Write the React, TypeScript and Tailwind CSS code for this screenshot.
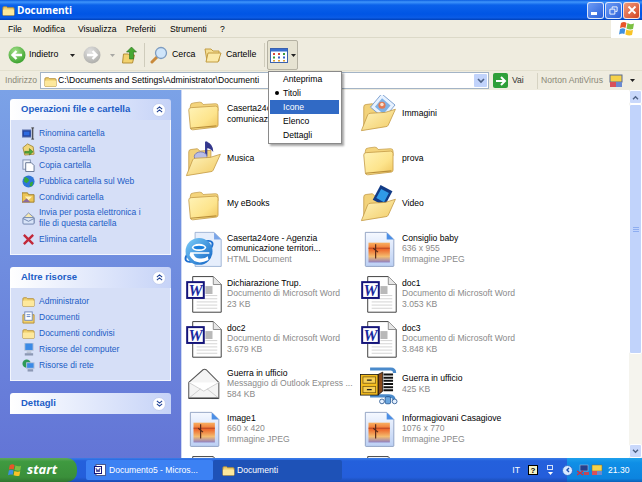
import type { ReactNode } from "react"

const Folder = ({ className = "w-[38px] h-[38px]" }: { className?: string }) => (
  <svg viewBox="0 0 48 48" className={className}>
    <defs>
      <linearGradient id="fg" x1="0" y1="0" x2="1" y2="1">
        <stop offset="0" stopColor="#fff3b8" />
        <stop offset="0.6" stopColor="#fde48c" />
        <stop offset="1" stopColor="#efc45c" />
      </linearGradient>
    </defs>
    <path d="M8 14 Q8 10 12 10 L20 9 Q23 9 24 12 L40 11 Q43 11 43 14 L43 20 L8 22 Z" fill="#f4d47c" stroke="#c9a351" />
    <path d="M6 19 Q6 16 9 16 L40 14 Q43 14 43 17 L43 38 Q43 40 41 40.5 L11 44 Q8 44 8 41 Z" fill="url(#fg)" stroke="#c39a45" />
    <path d="M8 42 L41 39" stroke="#b98f3a" strokeWidth="1.5" />
  </svg>
)

const OpenFolder = ({ children }: { children?: ReactNode }) => (
  <svg viewBox="0 0 48 48" className="w-[38px] h-[38px]">
    <defs>
      <linearGradient id="ofg" x1="0" y1="0" x2="1" y2="1">
        <stop offset="0" stopColor="#fff5c0" />
        <stop offset="1" stopColor="#f2cb64" />
      </linearGradient>
    </defs>
    <path d="M6 15 Q6 12 9 12 L17 11 L20 14 L34 13 L34 34 L6 44 Z" fill="#f2d27a" stroke="#c39a45" />
    {children}
    <path d="M3 45 L11 25 Q12 23 15 23 L33 22 L46 18 L37 38 Q36 40 34 40 Z" fill="url(#ofg)" stroke="#c39a45" />
  </svg>
)

const Music = () => (
  <OpenFolder>
    <path d="M28 2 L28 20" stroke="#3b3f96" strokeWidth="3" />
    <path d="M28 2 Q37 5 37 15 Q33 10 28 10 Z" fill="#34378c" />
    <ellipse cx="21" cy="21" rx="8" ry="6" fill="#b8bde6" stroke="#6a6fb5" />
  </OpenFolder>
)

const Pictures = () => (
  <OpenFolder>
    <rect x="19" y="3" width="22" height="22" transform="rotate(40 30 14)" fill="#e8f2ff" stroke="#6f95c9" />
    <rect x="23" y="7" width="14" height="14" transform="rotate(40 30 14)" fill="#7fb2e6" />
    <circle cx="29" cy="13" r="4.5" fill="#e07a55" />
    <circle cx="29" cy="12" r="2.2" fill="#fbe2cf" />
  </OpenFolder>
)

const VideoFolder = () => (
  <OpenFolder>
    <rect x="21" y="3" width="17" height="21" transform="rotate(28 30 14)" fill="#123b86" />
    <rect x="24" y="7" width="11" height="13" transform="rotate(28 30 14)" fill="#2f9ae8" />
    <path d="M26 24 L34 26 L28 32 Z" fill="#f3d9a0" stroke="#c9a351" />
  </OpenFolder>
)

const Sheet = () => (
  <>
    <path d="M11 2 L37 2 L47 12 L47 47 L11 47 Z" fill="#ffffff" stroke="#3a3a3a" strokeWidth="1.2" />
    <path d="M37 2 L37 12 L47 12" fill="#e6e6e6" stroke="#777777" />
    <rect x="27" y="14" width="9" height="10" fill="#b9b9b9" />
    <path d="M16 30 H42 M16 34 H42 M16 38 H42 M16 42 H42 M27 26 H42" stroke="#c9c9c9" />
  </>
)

const Page = () => (
  <svg viewBox="0 0 48 48" className="w-[38px] h-[38px] overflow-visible">
    <Sheet />
    <rect x="4" y="9" width="21" height="20" fill="#ffffff" stroke="#14147a" strokeWidth="2.5" />
    <text x="14.5" y="26" textAnchor="middle" fontSize="20" fontWeight="700" fontStyle="italic" fontFamily="'Liberation Serif', serif" fill="#1a2aa0">W</text>
  </svg>
)

// last row: only the top of the sheet shows above the taskbar
const PageTop = () => (
  <svg viewBox="0 0 48 48" className="w-[38px] h-[38px] overflow-visible">
    <Sheet />
  </svg>
)

const JpegDoc = () => (
  <svg viewBox="0 0 48 48" className="w-[38px] h-[38px]">
    <defs>
      <linearGradient id="jp" x1="0" y1="0" x2="0" y2="1">
        <stop offset="0" stopColor="#f6f9ff" />
        <stop offset="1" stopColor="#bcd0f4" />
      </linearGradient>
      <linearGradient id="sun" x1="0" y1="0" x2="0" y2="1">
        <stop offset="0" stopColor="#f8b060" />
        <stop offset="0.35" stopColor="#ee6a2c" />
        <stop offset="0.7" stopColor="#f4bc70" />
        <stop offset="1" stopColor="#8f7fc0" />
      </linearGradient>
    </defs>
    <path d="M8 3 L35 3 L44 12 L44 45 Q44 46 43 46 L9 46 Q8 46 8 45 Z" fill="url(#jp)" stroke="#7f93b8" />
    <path d="M35 3 L35 12 L44 12 Z" fill="#4c8fe6" />
    <rect x="12" y="16" width="27" height="25" fill="url(#sun)" />
    <path d="M12 23 H39" stroke="#a8341a" />
    <path d="M21 18 V36 M18 23 L24 28" stroke="#5a2a1a" strokeWidth="1.5" />
  </svg>
)

const IeDoc = () => (
  <svg viewBox="0 0 48 48" className="w-[38px] h-[38px]">
    <defs>
      <linearGradient id="ie" x1="0" y1="0" x2="1" y2="1">
        <stop offset="0" stopColor="#7fd0fa" />
        <stop offset="1" stopColor="#0f62c4" />
      </linearGradient>
    </defs>
    <path d="M14 3 L38 3 L47 12 L47 46 L14 46 Z" fill="#e6eefc" stroke="#8ea6cc" />
    <path d="M38 3 L38 12 L47 12 Z" fill="#7aa5e8" />
    <ellipse cx="19" cy="27" rx="20" ry="8" transform="rotate(-35 19 27)" fill="none" stroke="#1d6fd0" strokeWidth="2.5" />
    <circle cx="19" cy="27" r="17" fill="url(#ie)" />
    <ellipse cx="19" cy="22" rx="9" ry="4.5" fill="#ffffff" />
    <ellipse cx="19" cy="22" rx="7" ry="2.2" fill="#1a7fdc" />
    <path d="M8 28 H32 L32 30 H12 Q14 37 22 36 Q27 36 30 33 L31 38 Q14 46 7 32 Z" fill="#ffffff" />
  </svg>
)

const Mail = () => (
  <svg viewBox="0 0 48 48" className="w-[38px] h-[38px]">
    <path d="M6 22 L24 6 Q26 5 28 6 L44 22 L44 42 L6 42 Z" fill="#f4f4f4" stroke="#555555" strokeWidth="1.3" />
    <path d="M6 22 L25 33 L44 22" fill="#ffffff" stroke="#c6c6c6" />
    <path d="M6 42 L21 30 M44 42 L29 30" stroke="#c6c6c6" />
    <path d="M6 42 H44" stroke="#3a3a3a" strokeWidth="1.6" />
  </svg>
)

const WinZip = () => (
  <svg viewBox="0 0 48 48" className="w-[38px] h-[38px] overflow-visible">
    <path d="M14 5 H40 Q45 5 45 10 M14 39 H38 Q45 39 44 45" fill="none" stroke="#4a8acb" strokeWidth="4" />
    <path d="M31 12 H43 M31 16 H43 M31 20 H43 M31 24 H43 M31 28 H43 M31 32 H43" stroke="#111111" strokeWidth="2.5" />
    <path d="M24 12 L30 9 L30 33 L24 38 Z" fill="#8a4a1c" stroke="#111111" />
    <rect x="2" y="12" width="22" height="26" fill="#f5bd1f" stroke="#111111" />
    <rect x="5" y="15" width="16" height="8" fill="#f7cf55" stroke="#7a5a10" />
    <rect x="5" y="27" width="16" height="8" fill="#f7cf55" stroke="#7a5a10" />
    <path d="M10 19 H16 M10 31 H16" stroke="#222222" strokeWidth="1.5" />
    <circle cx="29" cy="46" r="3" fill="#e6f1ff" stroke="#1d4f8c" />
    <circle cx="45" cy="46" r="3" fill="#e6f1ff" stroke="#1d4f8c" />
    <rect x="33" y="40" width="7" height="9" rx="2" fill="#6aa6df" stroke="#1d4f8c" />
  </svg>
)

const Flag = ({ className }: { className: string }) => (
  <svg viewBox="0 0 16 15" className={className}>
    <path d="M2 2 Q5 0 7.5 2 L6.5 7 Q4 5.5 1 7 Z" fill="#e8552a" />
    <path d="M8.5 2 Q11 4 15 2.5 L14 8 Q11 9 7.5 7.5 Z" fill="#7cc043" />
    <path d="M1 8 Q4 6.5 6.3 8 L5.4 13 Q3 12 0 13.5 Z" fill="#3d8fe0" />
    <path d="M7.3 8.5 Q10.5 10 14 9 L13 14 Q10 15 6.4 13.5 Z" fill="#f8c326" />
  </svg>
)

const Ball = ({ dim }: { dim?: boolean }) => (
  <svg viewBox="0 0 18 18" className="w-[18px] h-[18px]">
    <defs>
      <radialGradient id="gb" cx="0.4" cy="0.3" r="0.8">
        <stop offset="0" stopColor="#a5e08a" />
        <stop offset="1" stopColor="#2d9a23" />
      </radialGradient>
      <radialGradient id="db" cx="0.4" cy="0.3" r="0.8">
        <stop offset="0" stopColor="#e2e2e2" />
        <stop offset="1" stopColor="#a8a8a4" />
      </radialGradient>
    </defs>
    <circle cx="9" cy="9" r="8.5" fill={dim ? "url(#db)" : "url(#gb)"} />
    {dim ? (
      <path d="M4 9 H13 M9.5 5 L13.5 9 L9.5 13" fill="none" stroke="#ffffff" strokeWidth="2.4" />
    ) : (
      <path d="M14 9 H5 M8.5 5 L4.5 9 L8.5 13" fill="none" stroke="#ffffff" strokeWidth="2.4" />
    )}
  </svg>
)

const Arrow = ({ color = "#222222" }: { color?: string }) => (
  <svg viewBox="0 0 5 3" className="w-[5px] h-[3px]">
    <path d="M0 0 H5 L2.5 3 Z" fill={color} />
  </svg>
)

const Chevrons = ({ down }: { down?: boolean }) => (
  <span className="w-[14px] h-[14px] rounded-full bg-white border border-[#c3cff0] flex items-center justify-center">
    <svg viewBox="0 0 8 8" className="w-[7px] h-[7px]">
      <path d={down ? "M1 1 L4 3.5 L7 1 M1 4.5 L4 7 L7 4.5" : "M1 3.5 L4 1 L7 3.5 M1 7 L4 4.5 L7 7"} fill="none" stroke="#1c3f94" strokeWidth="1.3" />
    </svg>
  </span>
)

const small = {
  rename: (
    <svg viewBox="0 0 14 14" className="w-[13px] h-[13px]">
      <rect x="0" y="3" width="10" height="8" fill="#24449c" stroke="#8a9ac6" />
      <rect x="2" y="5" width="6" height="4" fill="#2d6ae0" />
      <rect x="10" y="2" width="3" height="10" fill="#c0c8dc" />
      <path d="M11.5 1 V13 M10 1 H13 M10 13 H13" stroke="#333333" />
    </svg>
  ),
  move: (
    <svg viewBox="0 0 14 14" className="w-[13px] h-[13px]">
      <path d="M1 5 L6 1 L12 4 L13 12 L3 13 Z" fill="#f1d679" stroke="#a48a3c" />
      <path d="M3 9 H8 V6 L12 9.5 L8 13 V11 H3 Z" fill="#4fa83a" stroke="#2a6a20" strokeWidth="0.5" />
    </svg>
  ),
  copy: (
    <svg viewBox="0 0 14 14" className="w-[13px] h-[13px]">
      <rect x="1" y="1" width="8" height="10" fill="#eef2fb" stroke="#7f8fb0" />
      <path d="M4 4 H10 L13 7 V13.5 H4 Z" fill="#ffffff" stroke="#5f6f90" />
    </svg>
  ),
  web: (
    <svg viewBox="0 0 14 14" className="w-[13px] h-[13px]">
      <circle cx="7" cy="7" r="6.5" fill="#2d75d8" />
      <path d="M3 2 Q7 3 8 6 L5 9 L2 7 Z M9 8 L12 7 L11 12 L8 12 Z" fill="#36a83a" />
    </svg>
  ),
  share: (
    <svg viewBox="0 0 14 14" className="w-[13px] h-[13px]">
      <path d="M0 2 H6 L7 4 H13 V12 H0 Z" fill="#edc556" stroke="#9a7c2c" />
      <path d="M3 6 L11 6 L7 10 Z" fill="#fff1b8" />
      <path d="M0 12 L5 8 L9 12" fill="#8b6a9e" />
    </svg>
  ),
  mail: (
    <svg viewBox="0 0 14 14" className="w-[13px] h-[13px]">
      <path d="M2 6 L7 1 L13 6 V12 H2 Z" fill="#f7e9b0" stroke="#7d8db0" />
      <rect x="1" y="6" width="12" height="7" rx="1" fill="#d8e4f8" stroke="#6d82ac" />
      <path d="M1 7 L7 10 L13 7" fill="none" stroke="#6d82ac" />
    </svg>
  ),
  del: (
    <svg viewBox="0 0 14 14" className="w-[13px] h-[13px]">
      <path d="M2 2 L12 12 M12 2 L2 12" stroke="#c2293a" strokeWidth="2.6" />
    </svg>
  ),
  folder: (
    <svg viewBox="0 0 14 14" className="w-[13px] h-[13px]">
      <path d="M1 4 Q1 3 2 3 H5 L6 4 H12 Q13 4 13 5 V12 H1 Z" fill="#f2d26e" stroke="#b48f38" />
      <path d="M1 6 H13 V12 H1 Z" fill="#fde89c" />
    </svg>
  ),
  docs: (
    <svg viewBox="0 0 14 14" className="w-[13px] h-[13px]">
      <path d="M1 4 H13 V13 H1 Z" fill="#f2d26e" stroke="#b48f38" />
      <rect x="3" y="1" width="8" height="9" fill="#ffffff" stroke="#6f86b8" />
      <path d="M5 4 H9 M5 6 H9" stroke="#5b7fc8" />
    </svg>
  ),
  computer: (
    <svg viewBox="0 0 14 14" className="w-[13px] h-[13px]">
      <rect x="3" y="0" width="9" height="8" fill="#3b8ae6" stroke="#c0c8d8" />
      <path d="M5 9 H10 V11 H5 Z" fill="#bcc4d4" />
      <path d="M3 11 H12 V13.5 H3 Z" fill="#8c98b4" />
    </svg>
  ),
  network: (
    <svg viewBox="0 0 14 14" className="w-[13px] h-[13px]">
      <circle cx="5" cy="5" r="4.5" fill="#2e9a58" />
      <rect x="5" y="4" width="8" height="6" fill="#3b8ae6" stroke="#b9c4da" />
      <path d="M6 11 H12 V13.5 H6 Z" fill="#8c98b4" />
    </svg>
  ),
}

const NavRow = ({ icon, children }: { icon: ReactNode; children: ReactNode }) => (
  <div className="flex items-center gap-[4px] min-h-4 leading-[11px] text-[8.5px] text-[#215dc6]">
    <span className="w-[13px] h-[13px] shrink-0">{icon}</span>
    <span className="py-[2px]">{children}</span>
  </div>
)

const TaskCard = ({ title, down, children }: { title: string; down?: boolean; children?: ReactNode }) => (
  <div>
    <div className="h-[21px] pl-[11px] pr-[5px] flex items-center justify-between rounded-t-[3px] bg-gradient-to-r from-white to-[#c6d3f7]">
      <span className="text-[9.5px] font-bold text-[#215dc6]">{title}</span>
      <Chevrons down={down} />
    </div>
    {children && <div className="bg-[#d6dff7] pl-[11px] pr-[8px] pt-[5px] pb-[7px] border-x border-b border-white/70">{children}</div>}
  </div>
)

const Tile = ({ icon, lines = [] }: { icon: ReactNode; lines?: string[] }) => (
  <div className="flex items-center gap-[5px] h-[45px] min-w-0">
    <span className="w-[38px] h-[38px] shrink-0">{icon}</span>
    <div className="text-[8.6px] leading-[10.5px] whitespace-nowrap">
      {lines.map((l, i) => (
        <div key={l} className={i === 0 || l.startsWith("comun") ? "text-black" : "text-[#8a8a8a]"}>
          {l}
        </div>
      ))}
    </div>
  </div>
)

const MenuItem = ({ label, dot, active }: { label: string; dot?: boolean; active?: boolean }) => (
  <div className={`h-[14px] pl-[13px] flex items-center text-[8.6px] relative ${active ? "bg-[#316ac5] text-white" : "text-black"}`}>
    {dot && <span className="absolute left-[5px] top-[5px] w-1 h-1 rounded-full bg-black" />}
    {label}
  </div>
)

export default function App() {
  return (
    <div className="w-[642px] h-[482px] overflow-hidden relative flex flex-col font-['Liberation_Sans',sans-serif] bg-[#ece9d8]">
      {/* title bar */}
      <div className="h-5 shrink-0 flex items-center pl-[2px] pr-[2px] bg-[linear-gradient(180deg,#0a5ce0_0%,#3f95fb_10%,#0b62ea_25%,#0055e5_70%,#0a5be6_88%,#0040b8_100%)]">
        <span className="w-[13px] h-[13px] mr-[2px]">{small.folder}</span>
        <span className="text-white font-bold text-[10px] font-['Open_Sans',sans-serif]">Documenti</span>
        <div className="ml-auto flex gap-[1px]">
          <span className="w-[17px] h-[17px] rounded-[3px] border border-white/80 bg-gradient-to-br from-[#6d9bf5] to-[#2a5fd8] flex items-end pl-[3px] pb-[3px]">
            <span className="w-[6px] h-[3px] bg-white" />
          </span>
          <span className="w-[17px] h-[17px] rounded-[3px] border border-white/80 bg-gradient-to-br from-[#6d9bf5] to-[#2a5fd8] flex items-center justify-center">
            <svg viewBox="0 0 10 10" className="w-[9px] h-[9px]">
              <path d="M3.5 3 V1 H9 V6 H7 M1 3.5 H6.5 V9 H1 Z" fill="none" stroke="#ffffff" strokeWidth="1" />
            </svg>
          </span>
          <span className="w-[17px] h-[17px] rounded-[3px] border border-white/80 bg-gradient-to-br from-[#ef9a7a] to-[#d2401c] flex items-center justify-center">
            <svg viewBox="0 0 10 10" className="w-[10px] h-[10px]">
              <path d="M1.5 1.5 L8.5 8.5 M8.5 1.5 L1.5 8.5" stroke="#ffffff" strokeWidth="1.8" />
            </svg>
          </span>
        </div>
      </div>

      {/* menu bar */}
      <div className="h-[18px] shrink-0 flex items-center pl-2 text-[8.6px] text-black border-b border-[#dcd9c8] bg-[#efecdf]">
        <span className="w-[25px] pt-[1px]">File</span>
        <span className="w-[45px] pt-[1px]">Modifica</span>
        <span className="w-[48px] pt-[1px]">Visualizza</span>
        <span className="w-[44px] pt-[1px]">Preferiti</span>
        <span className="w-[50px] pt-[1px]">Strumenti</span>
        <span className="pt-[1px]">?</span>
        <span className="ml-auto w-[31px] h-[18px] bg-white flex items-center justify-center">
          <Flag className="w-[16px] h-[15px]" />
        </span>
      </div>

      {/* toolbar */}
      <div className="h-[33px] shrink-0 flex items-center pl-2 pt-[2px] text-[8.8px] text-black border-b border-[#e3e0cf] bg-[#efecdf]">
        <Ball />
        <span className="ml-[3px] w-[41px]">Indietro</span>
        <Arrow />
        <span className="ml-[8px]"><Ball dim /></span>
        <span className="ml-[9px]"><Arrow color="#a8a8a4" /></span>
        <svg viewBox="0 0 16 18" className="ml-[7px] w-[17px] h-[18px]">
          <path d="M1 8 H6 L7 9 H12 L10 17 H0 Z" fill="#f2d26e" stroke="#b48f38" />
          <path d="M7 13 V6 H4 L9 1 L14 6 H11 V13 Z" fill="#47a832" stroke="#2b6d20" strokeWidth="0.6" />
        </svg>
        <span className="ml-[5px] w-px h-6 bg-[#cfccbc]" />
        <svg viewBox="0 0 18 18" className="ml-[5px] w-[18px] h-[18px]">
          <path d="M2 16 L7 11" stroke="#c98a3c" strokeWidth="3" strokeLinecap="round" />
          <circle cx="11" cy="7" r="5.5" fill="#cfe5fa" stroke="#7d9cc0" strokeWidth="1.3" />
        </svg>
        <span className="ml-1 w-[32px]">Cerca</span>
        <svg viewBox="0 0 18 16" className="w-[18px] h-4">
          <path d="M1 2 H7 L9 4 H15 V14 H3 Z" fill="#f5de92" stroke="#c29c42" />
          <path d="M4 6 H17 L14 15 H2 Z" fill="#fbe9a8" stroke="#c29c42" />
        </svg>
        <span className="ml-1 w-[38px]">Cartelle</span>
        <span className="w-px h-6 bg-[#cfccbc]" />
        <div className="ml-[2px] w-[31px] h-[30px] flex items-center justify-center gap-[3px] rounded-[2px] border border-[#b5b2a3] bg-[#e6e3d2]">
          <svg viewBox="0 0 18 15" className="w-[18px] h-[15px]">
            <rect x="0.5" y="0.5" width="17" height="14" fill="#ffffff" stroke="#3a62b0" />
            <rect x="1" y="1" width="16" height="2.5" fill="#3a70d0" />
            <path d="M3 5 h2 v2 h-2 Z M8 5 h2 v2 h-2 Z" fill="#d94a3a" />
            <path d="M13 5 h2 v2 h-2 Z M3 8.5 h2 v2 h-2 Z" fill="#3a9a3a" />
            <path d="M8 8.5 h2 v2 h-2 Z M13 8.5 h2 v2 h-2 Z" fill="#3a62c8" />
            <path d="M3 12 h2 v1.5 h-2 Z M8 12 h2 v1.5 h-2 Z M13 12 h2 v1.5 h-2 Z" fill="#e0a030" />
          </svg>
          <Arrow />
        </div>
      </div>

      {/* address bar */}
      <div className="h-[19px] shrink-0 flex items-center pl-[5px] text-[8.6px] bg-[#efecdf]">
        <span className="w-[35px] text-[#8a8878]">Indirizzo</span>
        <div className="w-[449px] h-[17px] bg-white border border-[#a3b4c6] flex items-center pl-[3px] pr-[1px] text-black">
          <span className="w-3 h-3 mr-[2px]">{small.folder}</span>
          C:\Documents and Settings\Administrator\Documenti
          <span className="ml-auto w-[13px] h-[13px] bg-[#c1d3fb] rounded-[1px] flex items-center justify-center">
            <svg viewBox="0 0 8 6" className="w-2 h-[6px]">
              <path d="M1 1 L4 4 L7 1" fill="none" stroke="#4d6185" strokeWidth="1.6" />
            </svg>
          </span>
        </div>
        <span className="ml-[4px] w-[15px] h-[15px] rounded-[2px] bg-[#2f9f3a] flex items-center justify-center">
          <svg viewBox="0 0 12 12" className="w-3 h-3">
            <path d="M1 6 H10 M6 2 L10 6 L6 10" fill="none" stroke="#ffffff" strokeWidth="2" />
          </svg>
        </span>
        <span className="ml-[4px] w-[25px] text-[#333333]">Vai</span>
        <span className="w-px h-4 bg-[#d6d3c2]" />
        <span className="ml-[3px] w-[68px] text-[#8a8878] whitespace-nowrap">Norton AntiVirus</span>
        <svg viewBox="0 0 14 14" className="w-[14px] h-[14px]">
          <rect x="1" y="1" width="12" height="7" fill="#f6d24a" stroke="#5a6a90" />
          <rect x="1" y="8" width="6" height="5" fill="#d8505a" />
          <rect x="7" y="8" width="6" height="5" fill="#6a8ad0" />
        </svg>
        <span className="ml-[7px]"><Arrow /></span>
      </div>

      {/* main area */}
      <div className="flex-1 min-h-0 flex bg-white">
        <aside className="w-[181px] shrink-0 pt-[9px] px-[10px] flex flex-col gap-3 bg-gradient-to-b from-[#7ba2e7] to-[#6375d6]">
          <TaskCard title="Operazioni file e cartella">
            <NavRow icon={small.rename}>Rinomina cartella</NavRow>
            <NavRow icon={small.move}>Sposta cartella</NavRow>
            <NavRow icon={small.copy}>Copia cartella</NavRow>
            <NavRow icon={small.web}>Pubblica cartella sul Web</NavRow>
            <NavRow icon={small.share}>Condividi cartella</NavRow>
            <NavRow icon={small.mail}>Invia per posta elettronica i<br />file di questa cartella</NavRow>
            <NavRow icon={small.del}>Elimina cartella</NavRow>
          </TaskCard>
          <TaskCard title="Altre risorse">
            <NavRow icon={small.folder}>Administrator</NavRow>
            <NavRow icon={small.docs}>Documenti</NavRow>
            <NavRow icon={small.folder}>Documenti condivisi</NavRow>
            <NavRow icon={small.computer}>Risorse del computer</NavRow>
            <NavRow icon={small.network}>Risorse di rete</NavRow>
          </TaskCard>
          <TaskCard title="Dettagli" down />
        </aside>

        <div className="flex-1 min-w-0 overflow-hidden pl-[2px] pt-[1px] border-l border-[#5a7edc]/30">
          <div className="grid grid-cols-[175px_1fr]">
            <Tile icon={<Folder />} lines={["Caserta24ore - Agenzia", "comunicazione territori..."]} />
            <Tile icon={<Pictures />} lines={["Immagini"]} />
            <Tile icon={<Music />} lines={["Musica"]} />
            <Tile icon={<Folder />} lines={["prova"]} />
            <Tile icon={<Folder />} lines={["My eBooks"]} />
            <Tile icon={<VideoFolder />} lines={["Video"]} />
            <Tile icon={<IeDoc />} lines={["Caserta24ore - Agenzia", "comunicazione territori...", "HTML Document"]} />
            <Tile icon={<JpegDoc />} lines={["Consiglio baby", "636 x 955", "Immagine JPEG"]} />
            <Tile icon={<Page />} lines={["Dichiarazione Trup.", "Documento di Microsoft Word", "23 KB"]} />
            <Tile icon={<Page />} lines={["doc1", "Documento di Microsoft Word", "3.053 KB"]} />
            <Tile icon={<Page />} lines={["doc2", "Documento di Microsoft Word", "3.679 KB"]} />
            <Tile icon={<Page />} lines={["doc3", "Documento di Microsoft Word", "3.848 KB"]} />
            <Tile icon={<Mail />} lines={["Guerra in ufficio", "Messaggio di Outlook Express ...", "584 KB"]} />
            <Tile icon={<WinZip />} lines={["Guerra in ufficio", "425 KB"]} />
            <Tile icon={<JpegDoc />} lines={["Image1", "660 x 420", "Immagine JPEG"]} />
            <Tile icon={<JpegDoc />} lines={["Informagiovani Casagiove", "1076 x 770", "Immagine JPEG"]} />
            <Tile icon={<PageTop />} />
            <Tile icon={<PageTop />} />
          </div>
        </div>

        {/* scrollbar */}
        <div className="w-[13px] shrink-0 flex flex-col bg-[#f5f4ee]">
          <span className="h-[14px] bg-[#c9d8fb] rounded-[2px] border border-white flex items-center justify-center">
            <svg viewBox="0 0 8 6" className="w-[7px] h-[5px]">
              <path d="M1 5 L4 2 L7 5" fill="none" stroke="#4d6185" strokeWidth="1.6" />
            </svg>
          </span>
          <span className="h-[250px] bg-[#c1d3fb] rounded-[2px] border border-white flex flex-col items-center justify-center gap-px">
            <span className="w-[6px] h-px bg-[#8eadf0]" />
            <span className="w-[6px] h-px bg-[#8eadf0]" />
            <span className="w-[6px] h-px bg-[#8eadf0]" />
          </span>
          <span className="mt-auto h-[14px] bg-[#c9d8fb] rounded-[2px] border border-white flex items-center justify-center">
            <svg viewBox="0 0 8 6" className="w-[7px] h-[5px]">
              <path d="M1 1 L4 4 L7 1" fill="none" stroke="#4d6185" strokeWidth="1.6" />
            </svg>
          </span>
        </div>
      </div>

      {/* taskbar */}
      <div className="h-6 shrink-0 flex items-center text-white text-[8.6px] bg-[linear-gradient(180deg,#3a7de8_0%,#2460dc_12%,#245edb_80%,#1a4cb4_100%)]">
        <div className="w-[77px] h-6 flex items-center pl-2 gap-[5px] rounded-r-[10px] bg-[linear-gradient(180deg,#5da85c_0%,#3f9a40_15%,#3a8f3a_80%,#2f752f_100%)]">
          <Flag className="w-[14px] h-[14px]" />
          <span className="italic font-bold text-[13px] font-['Open_Sans',sans-serif]">start</span>
        </div>
        <div className="ml-[9px] w-[127px] h-5 rounded-[2px] bg-[#3c81f3] flex items-center pl-2 gap-[3px]">
          <svg viewBox="0 0 12 12" className="w-3 h-3">
            <rect x="2" y="0.5" width="9.5" height="11" fill="#ffffff" stroke="#4a5a90" />
            <rect x="0.5" y="2.5" width="7" height="7" fill="#ffffff" stroke="#14147a" />
            <path d="M2 4 L3 8 L4 5.5 L5 8 L6 4" fill="none" stroke="#14147a" strokeWidth="0.8" />
          </svg>
          Documento5 - Micros...
        </div>
        <div className="w-[129px] h-5 rounded-[2px] bg-[#1e52b7] flex items-center pl-[9px] gap-[3px]">
          <span className="w-3 h-3">{small.folder}</span>
          Documenti
        </div>
        <span className="ml-auto">IT</span>
        <span className="ml-[8px] w-[10px] h-[10px] bg-[#f4f2c4] border border-black text-black font-bold text-[8px] leading-[9px] flex items-center justify-center">?</span>
        <span className="ml-[9px] flex flex-col items-center gap-[2px]">
          <span className="w-[6px] h-[5px] border border-white/80" />
          <Arrow color="#ffffff" />
        </span>
        <div className="ml-[14px] w-[75px] h-6 flex items-center gap-[2px] bg-[linear-gradient(180deg,#1ea0ec_0%,#0f8fe6_20%,#0c84df_85%,#0b60b8_100%)]">
          <span className="w-[11px] h-[11px] -ml-[5px] mr-[2px] rounded-full bg-[#d9e9ff] border border-[#2f6fd0] flex items-center justify-center shrink-0">
            <svg viewBox="0 0 6 6" className="w-[6px] h-[6px]">
              <path d="M4 1 L2 3 L4 5" fill="none" stroke="#1c4fb0" strokeWidth="1.4" />
            </svg>
          </span>
          <svg viewBox="0 0 12 12" className="w-3 h-3 shrink-0">
            <rect x="3" y="1" width="8" height="6" fill="#25408c" stroke="#c0c8dc" strokeWidth="0.5" />
            <path d="M0 7 L6 11 M6 7 L0 11" stroke="#d8303a" strokeWidth="1.4" />
            <path d="M7 8 H12 V11 H7 Z" fill="#c0485a" />
          </svg>
          <svg viewBox="0 0 12 12" className="w-3 h-3 shrink-0">
            <rect x="1" y="1" width="10" height="6" fill="#f6d24a" stroke="#7a6a30" strokeWidth="0.5" />
            <rect x="1" y="7" width="5" height="4" fill="#d8505a" />
            <rect x="6" y="7" width="5" height="4" fill="#6a8ad0" />
          </svg>
          <span className="ml-[3px] whitespace-nowrap">21.30</span>
        </div>
      </div>

      {/* views menu */}
      <div className="absolute left-[268px] top-[71px] w-[74px] h-[73px] bg-white border border-[#8a8a8a] pl-[1px] pr-[2px] shadow-[2px_2px_2px_rgba(0,0,0,0.35)]">
        <MenuItem label="Anteprima" />
        <MenuItem label="Titoli" dot />
        <MenuItem label="Icone" active />
        <MenuItem label="Elenco" />
        <MenuItem label="Dettagli" />
      </div>
    </div>
  )
}
